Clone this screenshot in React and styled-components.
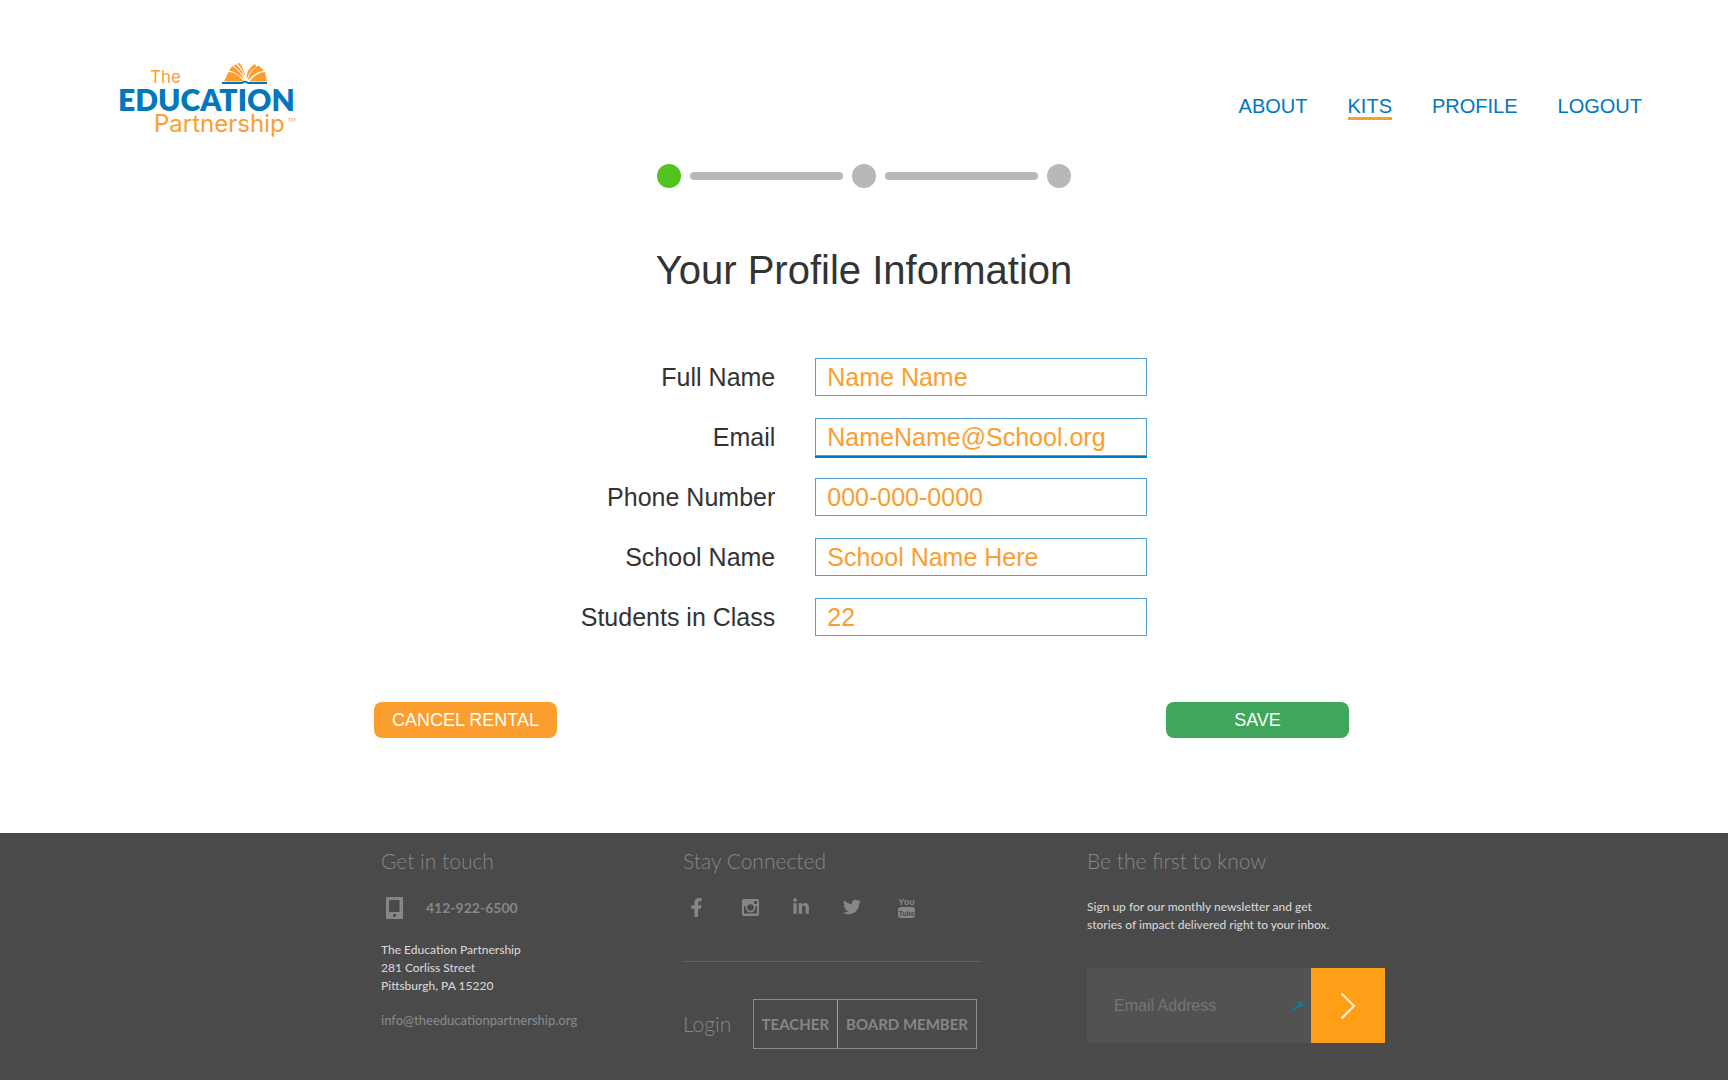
import React from "react";
import styled, { createGlobalStyle, css } from "styled-components";
import { FaFacebookF, FaLinkedinIn, FaTwitter } from "react-icons/fa";

const sans = '"Liberation Sans", Arial, Helvetica, sans-serif';
const humanist = 'Lato, "Liberation Sans", sans-serif';

const GlobalStyle = createGlobalStyle`
  *, *::before, *::after { box-sizing: border-box; }
  body { margin: 0; background: #fff; font-family: ${sans}; color: #333; }
  h1, h2, p, ul, ol { margin: 0; padding: 0; font-weight: 400; }
  ul, ol { list-style: none; }
  a { color: inherit; text-decoration: none; }
  button, input { font: inherit; margin: 0; }
`;

const Page = styled.div`
  min-height: 100vh;
  display: flex;
  flex-direction: column;
`;

const Header = styled.header`
  display: flex;
  justify-content: space-between;
  align-items: flex-start;
  padding: 62px 86px 0 118px;
`;

const LogoLink = styled.a`
  display: block;
  line-height: 0;
`;

const NavList = styled.ul`
  display: flex;
  gap: 40px;
  padding-top: 32px;
`;

const NavLink = styled.a`
  display: block;
  height: 26px;
  font-size: 20px;
  line-height: 24px;
  color: #0077be;
  border-bottom: 3px solid ${(p) => (p.$active ? "#fb9e2f" : "transparent")};
`;

const Main = styled.main`
  display: flex;
  flex-direction: column;
  align-items: center;
  padding: 24px 24px 95px;
`;

const Steps = styled.ol`
  display: flex;
  align-items: center;
  gap: 9px;
`;

const StepDot = styled.li`
  width: 24px;
  height: 24px;
  border-radius: 50%;
  background: ${(p) => (p.$current ? "#52c41f" : "#b8b8b8")};
`;

const StepBar = styled.li`
  width: 153px;
  height: 8px;
  border-radius: 4px;
  background: #b8b8b8;
`;

const Title = styled.h1`
  margin-top: 58px;
  font-size: 40px;
  line-height: 48px;
`;

const Form = styled.form`
  width: 100%;
  display: flex;
  flex-direction: column;
  align-items: center;
`;

const Fields = styled.div`
  display: grid;
  grid-template-columns: auto 332px;
  column-gap: 40px;
  row-gap: 20px;
  margin-top: 64px;
`;

const Label = styled.label`
  height: 40px;
  font-size: 25px;
  line-height: 38px;
  text-align: right;
`;

const Input = styled.input`
  width: 100%;
  height: 38px;
  padding: 0 11px;
  font-size: 25px;
  line-height: 36px;
  color: #fb9e2f;
  background: #fff;
  border: 1px solid #4fa0d3;
  border-radius: 0;
  outline: none;
  ${(p) =>
    p.$active &&
    css`
      box-shadow: 0 2px 0 #0077be;
    `}
`;

const Actions = styled.div`
  width: 100%;
  max-width: 980px;
  display: flex;
  justify-content: space-between;
  margin-top: 64px;
  padding-right: 5px;
`;

const ActionButton = styled.button`
  width: 183px;
  height: 36px;
  padding: 0;
  border: 0;
  border-radius: 8px;
  font-size: 18px;
  line-height: 36px;
  color: #fff;
  background: ${(p) => (p.$kind === "save" ? "#3fa75a" : "#fb9e2f")};
`;

const Footer = styled.footer`
  flex: 1;
  background: #4a4a4a;
  font-family: ${humanist};
  color: #868686;
`;

const FooterGrid = styled.div`
  max-width: 1042px;
  margin: 0 auto;
  padding: 14px 0 32px 38px;
  display: grid;
  grid-template-columns: 302px 404px 298px;
`;

const FooterColumn = styled.section`
  width: ${(p) => p.$width || "auto"};
`;

const FooterTitle = styled.h2`
  font-size: 21px;
  font-weight: 300;
  line-height: 28px;
`;

const Phone = styled.a`
  display: flex;
  align-items: center;
  gap: 23px;
  margin-top: 21px;
  padding-left: 5px;
  font-size: 14px;
  font-weight: 700;
  line-height: 24px;
`;

const Address = styled.p`
  margin-top: 21px;
  font-size: 12px;
  font-weight: 500;
  line-height: 18px;
  color: #d4d4d4;
`;

const Mail = styled.a`
  display: block;
  margin-top: 16px;
  font-size: 13px;
  font-weight: 500;
  line-height: 18px;
`;

const Social = styled.ul`
  display: flex;
  gap: 33px;
  margin-top: 20px;
  padding-left: 1px;
`;

const SocialLink = styled.a`
  display: flex;
  align-items: center;
  justify-content: center;
  width: ${(p) => (p.$wide ? "24px" : "18px")};
  height: 24px;
`;

const LoginRow = styled.div`
  display: flex;
  align-items: center;
  justify-content: space-between;
  margin-top: 42px;
  padding: 37px 4px 0 0;
  border-top: 1px solid #636363;
`;

const LoginGroup = styled.div`
  display: flex;
  border: 1px solid #8c8c8c;
`;

const LoginLink = styled.a`
  padding: 0 8px;
  font-size: 15px;
  font-weight: 700;
  line-height: 48px;

  & + & {
    border-left: 1px solid #a0a0a0;
  }
`;

const Blurb = styled.p`
  margin-top: 23px;
  font-size: 12px;
  font-weight: 500;
  line-height: 18px;
  color: #d4d4d4;
`;

const Subscribe = styled.form`
  display: flex;
  height: 75px;
  margin-top: 34px;
  background: #525252;
`;

const SubscribeInput = styled.input`
  flex: 1;
  min-width: 0;
  padding: 0 0 0 27px;
  border: 0;
  outline: none;
  background: transparent;
  font-family: ${sans};
  font-size: 16px;
  color: #868686;

  &::placeholder {
    color: #757575;
    opacity: 1;
  }
`;

const SubscribeButton = styled.button`
  width: 74px;
  padding: 0;
  border: 0;
  background: #ff9f18;
  line-height: 0;
`;

const Mark = styled.svg`
  align-self: center;
  margin-right: 3px;
`;

function Logo() {
  return (
    <svg width="184" height="78" viewBox="-2 0 184 78" role="img" aria-label="The Education Partnership">
      <g fill="#fb9e2f">
        <path d="M104 19.500 L108.500 10 Q117 10 124 19.500 Z" />
        <path d="M109 8.500 L112.500 4 Q120 9 124.500 18 Q117 10.500 109 8.500 Z" />
        <path d="M113.500 3.500 L116.500 2.500 Q122 8 124.800 15.500 Q120 8.500 113.500 3.500 Z" />
        <path d="M117.500 1.500 L119.500 1 Q124 7 125.500 15 Q122.500 7 117.500 1.500 Z" />
        <path d="M126.500 16 Q127 6 135 2 L136.500 4.500 Q129.500 8.500 127 17 Z" />
        <path d="M128 17 Q130.500 7.500 138.500 3.500 L144 8.500 Q134 10.500 128.500 18 Z" />
        <path d="M129.500 19.500 Q135 11 145 10 L147 19.500 Z" />
      </g>
      <path d="M102 20 H122 Q125 17.500 128 20 H147 V22 H128 L125 20.500 L122 22 H102 Z" fill="#0077be" />
      <text x="30" y="21" fontFamily="Inter, sans-serif" fontSize="17" fill="#fb9e2f">The</text>
      <text x="-2" y="49" fontFamily="Lato, sans-serif" fontWeight="800" fontSize="30" fill="#0077be">EDUCATION</text>
      <text x="34" y="70" fontFamily="Inter, sans-serif" fontSize="24" fill="#fb9e2f">Partnership</text>
      <text x="168" y="60" fontFamily="Lato, sans-serif" fontSize="5" fill="#fb9e2f">TM</text>
    </svg>
  );
}

function PhoneIcon() {
  return (
    <svg width="17" height="22" viewBox="0 0 17 22" aria-hidden="true">
      <path
        fill="#868686"
        fillRule="evenodd"
        d="M1 0H16Q17 0 17 1V21Q17 22 16 22H1Q0 22 0 21V1Q0 0 1 0ZM3 3V15H13.500V3ZM8.500 16.800A1.600 1.600 0 1 0 8.500 20A1.600 1.600 0 1 0 8.500 16.800Z"
      />
    </svg>
  );
}

function CameraIcon() {
  return (
    <svg width="17" height="17" viewBox="0 0 17 17" aria-hidden="true">
      <path
        fill="#868686"
        fillRule="evenodd"
        d="M2 0H15Q17 0 17 2V15Q17 17 15 17H2Q0 17 0 15V2Q0 0 2 0ZM12 2V5H15V2ZM2 7V14.500H15V7H13.300A5 5 0 1 1 3.700 7ZM8.500 5.200A3.300 3.300 0 1 0 8.500 11.800A3.300 3.300 0 1 0 8.500 5.200Z"
      />
    </svg>
  );
}

function YouTubeIcon() {
  return (
    <svg width="17" height="22" viewBox="0 0 17 22" aria-hidden="true">
      <rect x="0" y="11" width="17" height="11" rx="3" fill="#868686" />
      <text x="8.500" y="9" textAnchor="middle" fontFamily="'Liberation Sans Narrow', 'Liberation Sans', sans-serif" fontWeight="700" fontSize="9" fill="#868686">You</text>
      <text x="8.500" y="20" textAnchor="middle" fontFamily="'Liberation Sans Narrow', 'Liberation Sans', sans-serif" fontWeight="700" fontSize="7" fill="#4a4a4a">Tube</text>
    </svg>
  );
}

const navItems = ["ABOUT", "KITS", "PROFILE", "LOGOUT"];

const fields = [
  { id: "name", label: "Full Name", value: "Name Name" },
  { id: "email", label: "Email", value: "NameName@School.org", active: true },
  { id: "phone", label: "Phone Number", value: "000-000-0000" },
  { id: "school", label: "School Name", value: "School Name Here" },
  { id: "students", label: "Students in Class", value: "22" },
];

const socials = [
  { name: "Facebook", icon: <FaFacebookF size={19} />, wide: true },
  { name: "Instagram", icon: <CameraIcon /> },
  { name: "LinkedIn", icon: <FaLinkedinIn size={18} /> },
  { name: "Twitter", icon: <FaTwitter size={18} /> },
  { name: "YouTube", icon: <YouTubeIcon />, wide: true },
];

export default function App() {
  return (
    <Page>
      <GlobalStyle />
      <Header>
        <LogoLink href="#home"><Logo /></LogoLink>
        <nav>
          <NavList>
            {navItems.map((item) => (
              <li key={item}>
                <NavLink href={`#${item.toLowerCase()}`} $active={item === "KITS"}>{item}</NavLink>
              </li>
            ))}
          </NavList>
        </nav>
      </Header>

      <Main>
        <Steps aria-label="Progress">
          <StepDot $current aria-current="step" />
          <StepBar aria-hidden="true" />
          <StepDot />
          <StepBar aria-hidden="true" />
          <StepDot />
        </Steps>
        <Title>Your Profile Information</Title>
        <Form onSubmit={(e) => e.preventDefault()}>
          <Fields>
            {fields.map((f) => (
              <React.Fragment key={f.id}>
                <Label htmlFor={f.id}>{f.label}</Label>
                <Input id={f.id} defaultValue={f.value} $active={f.active} />
              </React.Fragment>
            ))}
          </Fields>
          <Actions>
            <ActionButton type="button">CANCEL RENTAL</ActionButton>
            <ActionButton type="submit" $kind="save">SAVE</ActionButton>
          </Actions>
        </Form>
      </Main>

      <Footer>
        <FooterGrid>
          <FooterColumn>
            <FooterTitle>Get in touch</FooterTitle>
            <Phone href="tel:4129226500"><PhoneIcon />412-922-6500</Phone>
            <Address>
              The Education Partnership<br />
              281 Corliss Street<br />
              Pittsburgh, PA 15220
            </Address>
            <Mail href="mailto:info@theeducationpartnership.org">info@theeducationpartnership.org</Mail>
          </FooterColumn>

          <FooterColumn $width="298px">
            <FooterTitle>Stay Connected</FooterTitle>
            <Social>
              {socials.map((s) => (
                <li key={s.name}>
                  <SocialLink href={`#${s.name.toLowerCase()}`} aria-label={s.name} $wide={s.wide}>{s.icon}</SocialLink>
                </li>
              ))}
            </Social>
            <LoginRow>
              <FooterTitle>Login</FooterTitle>
              <LoginGroup>
                <LoginLink href="#teacher">TEACHER</LoginLink>
                <LoginLink href="#board">BOARD MEMBER</LoginLink>
              </LoginGroup>
            </LoginRow>
          </FooterColumn>

          <FooterColumn>
            <FooterTitle>Be the first to know</FooterTitle>
            <Blurb>
              Sign up for our monthly newsletter and get<br />
              stories of impact delivered right to your inbox.
            </Blurb>
            <Subscribe onSubmit={(e) => e.preventDefault()}>
              <SubscribeInput type="email" placeholder="Email Address" aria-label="Email Address" />
              <Mark width="17" height="12" viewBox="0 0 17 12" aria-hidden="true">
                <path d="M0 11 Q4 6 8 4.500 L6.500 0.500 L9.500 2 L11 1 L10.500 4 L17 4.500 L11 6 Q6 7.500 1 11.500 Z" fill="#0b7f9e" />
              </Mark>
              <SubscribeButton type="submit" aria-label="Subscribe">
                <svg width="16" height="28" viewBox="0 0 16 28" aria-hidden="true">
                  <path d="M1.500 1.500 L14 14 L1.500 26.500" fill="none" stroke="#fff" strokeOpacity="0.85" strokeWidth="2" />
                </svg>
              </SubscribeButton>
            </Subscribe>
          </FooterColumn>
        </FooterGrid>
      </Footer>
    </Page>
  );
}
